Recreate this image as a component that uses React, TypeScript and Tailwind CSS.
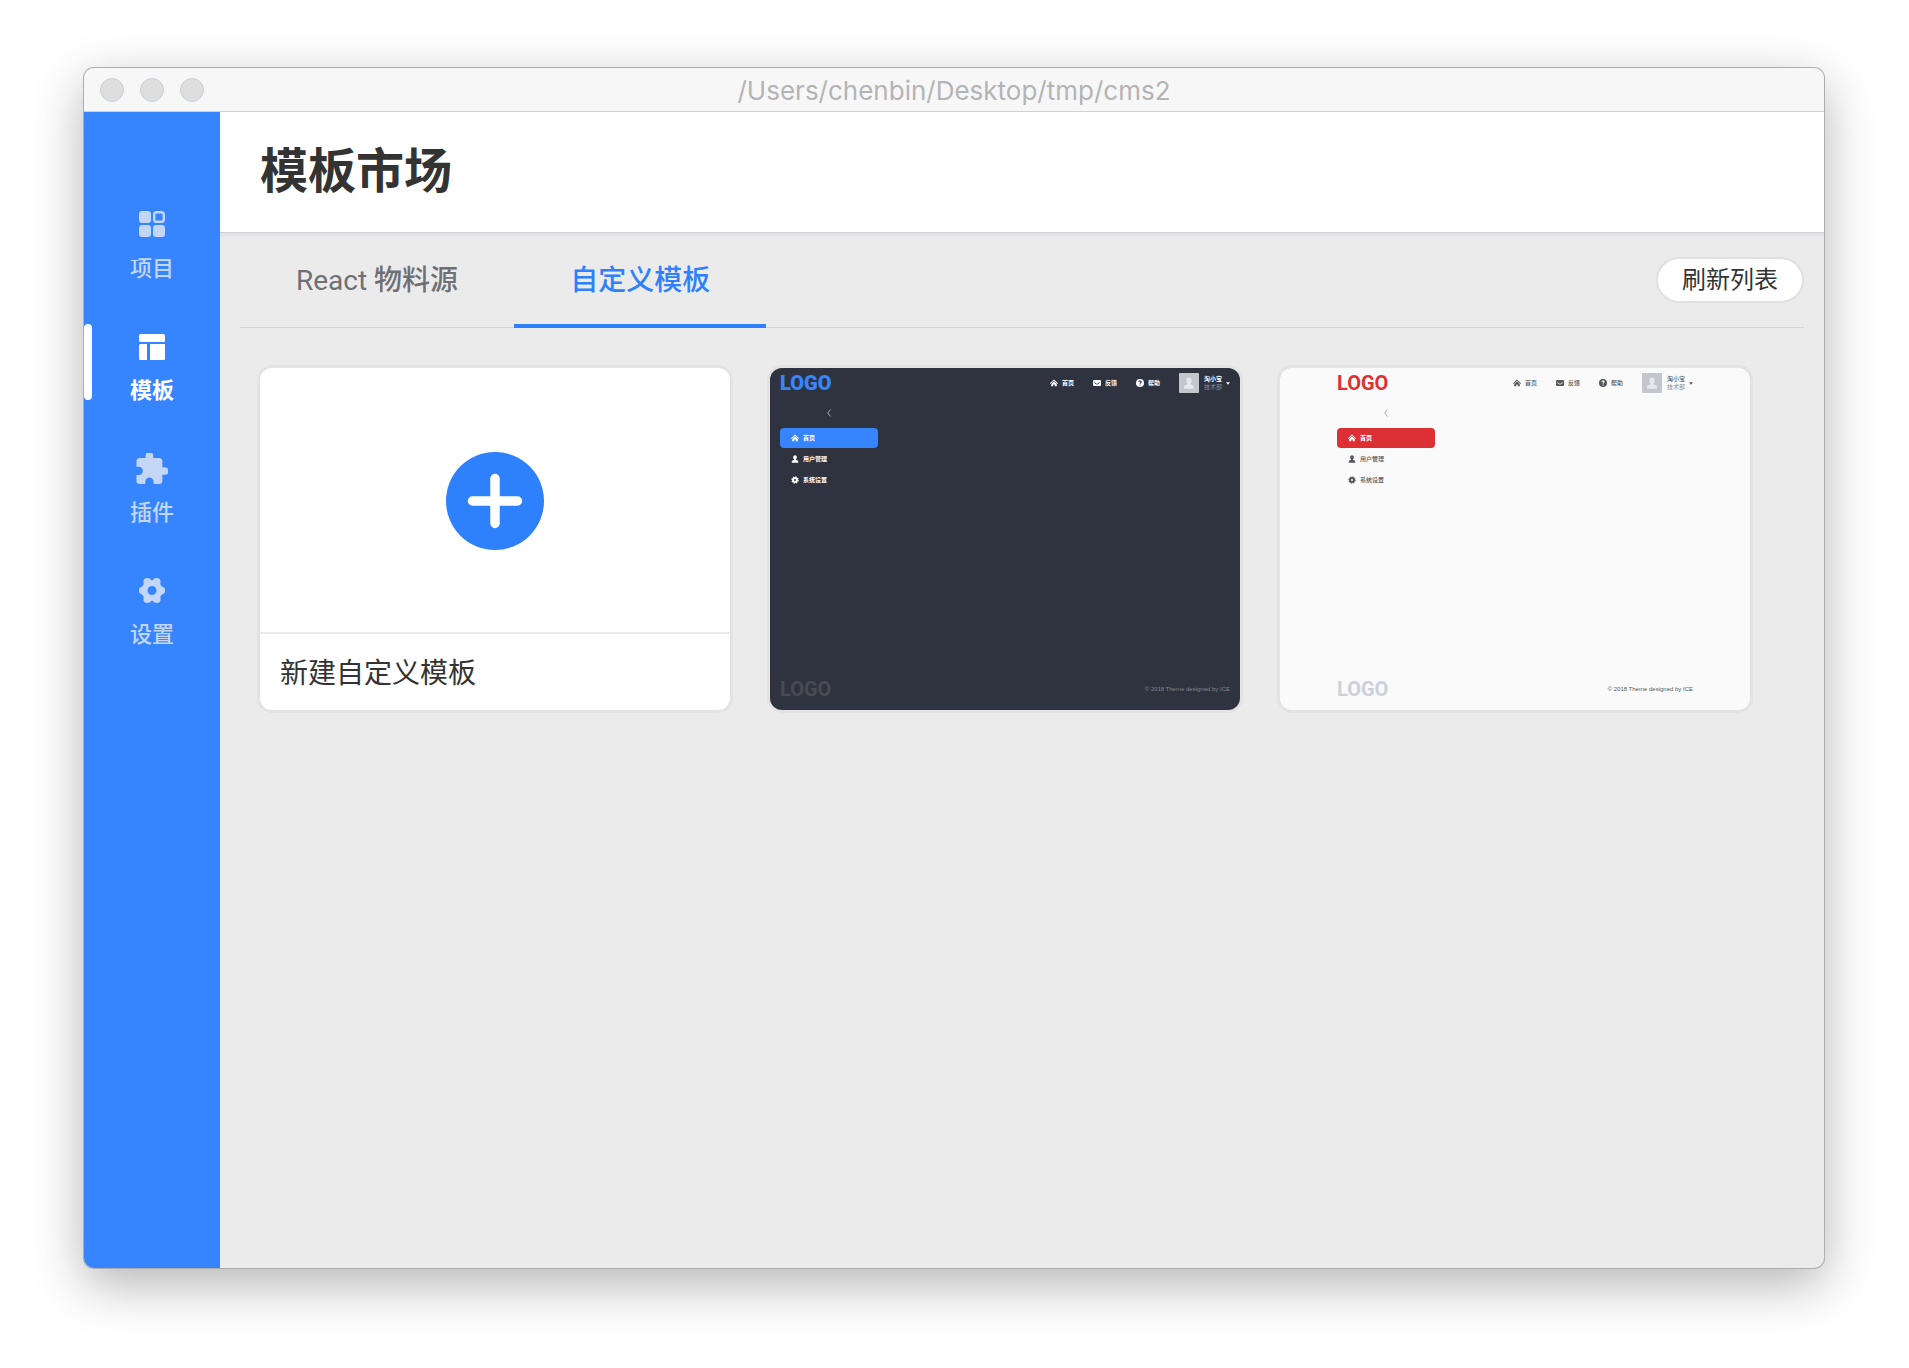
import React from "react";

type IconProps = { className?: string };

function ProjectIcon({ className }: IconProps) {
  return (
    <svg viewBox="0 0 32 32" className={className} fill="currentColor" aria-hidden="true">
      <rect x="3" y="2" width="12" height="12" rx="3" />
      <rect x="18.2" y="3.2" width="9.6" height="9.6" rx="2.4" fill="none" stroke="currentColor" strokeWidth="2.4" />
      <rect x="3" y="16" width="12" height="12" rx="3" />
      <rect x="17" y="16" width="12" height="12" rx="3" />
    </svg>
  );
}

function TemplateIcon({ className }: IconProps) {
  return (
    <svg viewBox="0 0 32 32" className={className} fill="currentColor" aria-hidden="true">
      <rect x="3" y="3" width="26" height="8" rx="1.500" />
      <path d="M4.500 13H11v16H4.500A1.500 1.500 0 0 1 3 27.500V14.500A1.500 1.500 0 0 1 4.500 13z" />
      <path d="M14 13h15v14.500a1.500 1.500 0 0 1-1.500 1.500H14z" />
    </svg>
  );
}

function PluginIcon({ className }: IconProps) {
  return (
    <svg viewBox="1.7 1.7 21 21" className={className} fill="currentColor" aria-hidden="true">
      <path d="M20.500 11H19V7c0-1.100-.9-2-2-2h-4V3.500a2.500 2.500 0 0 0-5 0V5H4c-1.100 0-1.990.9-1.990 2v3.800H3.500c1.490 0 2.700 1.210 2.700 2.700s-1.210 2.700-2.700 2.700H2V20c0 1.100.9 2 2 2h3.800v-1.500c0-1.490 1.210-2.700 2.700-2.700 1.490 0 2.700 1.210 2.700 2.700V22H17c1.100 0 2-.9 2-2v-4h1.500a2.500 2.500 0 0 0 0-5z" />
    </svg>
  );
}

function SettingsIcon({ className }: IconProps) {
  return (
    <svg viewBox="0 0 32 32" className={className} fill="currentColor" aria-hidden="true">
      <circle cx="16" cy="15.500" r="7.500" fill="none" stroke="currentColor" strokeWidth="6" />
      <circle cx="25" cy="15.500" r="4" />
      <circle cx="7" cy="15.500" r="4" />
      <circle cx="20.600" cy="7" r="4" />
      <circle cx="11.400" cy="7" r="4" />
      <circle cx="20.600" cy="24" r="4" />
      <circle cx="11.400" cy="24" r="4" />
    </svg>
  );
}

function HomeGlyph({ className }: IconProps) {
  return (
    <svg viewBox="0 0 16 16" className={className} fill="currentColor" aria-hidden="true">
      <path d="M8 1 16 8.500l-1.200 1.300L8 3.500 1.200 9.800 0 8.500z" />
      <path d="M8 5l5.500 5v4.500h-4V11h-3v3.500h-4V10z" />
    </svg>
  );
}

function MailGlyph({ className }: IconProps) {
  return (
    <svg viewBox="0 0 16 16" className={className} fill="currentColor" aria-hidden="true">
      <path
        fillRule="evenodd"
        d="M2 2h12a2 2 0 0 1 2 2v8a2 2 0 0 1-2 2H2a2 2 0 0 1-2-2V4a2 2 0 0 1 2-2zm.6 4.200L8 9.800l5.400-3.600v1.700L8 11.500 2.600 7.900z"
      />
    </svg>
  );
}

function HelpGlyph({ className }: IconProps) {
  return (
    <svg viewBox="0 0 16 16" className={className} fill="currentColor" aria-hidden="true">
      <path
        fillRule="evenodd"
        d="M8 0a8 8 0 1 1 0 16A8 8 0 0 1 8 0zM4.800 6h2c0-.8.500-1.200 1.200-1.200s1.200.4 1.200 1-.4.900-1 1.300C7.400 7.700 7 8.300 7 9.500h2c0-.8.300-1.100.9-1.500.8-.5 1.400-1.200 1.400-2.300C11.300 4 10 3 8 3S4.800 4.200 4.800 6zM7 10.800V13h2v-2.200z"
      />
    </svg>
  );
}

function UserGlyph({ className }: IconProps) {
  return (
    <svg viewBox="0 0 16 16" className={className} fill="currentColor" aria-hidden="true">
      <path d="M8 .5c2.300 0 3.700 1.700 3.700 4 0 1.700-.8 3.200-1.900 4v1l3.200 1.500c1 .5 1.500 1.500 1.500 2.500v2h-13v-2c0-1 .5-2 1.500-2.500l3.200-1.500v-1c-1.100-.8-1.900-2.300-1.900-4 0-2.300 1.400-4 3.700-4z" />
    </svg>
  );
}

function GearGlyph({ className }: IconProps) {
  return (
    <svg viewBox="0 0 16 16" className={className} fill="none" stroke="currentColor" aria-hidden="true">
      <circle cx="8" cy="8" r="4" strokeWidth="4" />
      <circle cx="8" cy="8" r="6.200" strokeWidth="2.400" strokeDasharray="2.600 2.270" />
    </svg>
  );
}

const NAV = [
  { label: "项目", Icon: ProjectIcon },
  { label: "模板", Icon: TemplateIcon, active: true },
  { label: "插件", Icon: PluginIcon },
  { label: "设置", Icon: SettingsIcon },
];

function Sidebar() {
  return (
    <nav className="flex w-[136px] shrink-0 flex-col gap-[43px] bg-[#3784ff] pt-[90px]">
      {NAV.map(({ label, Icon, active }) => (
        <a
          key={label}
          href="#"
          className={
            active
              ? "relative flex flex-col items-center pt-[7px] text-[22px] leading-6 font-bold text-white"
              : "relative flex flex-col items-center pt-[7px] text-[22px] leading-6 font-medium text-[#c3d6f6]"
          }
        >
          {active && <span className="absolute top-0 left-0 h-[76px] w-2 rounded-full bg-white" />}
          <Icon className="size-8" />
          <span className="mt-4">{label}</span>
        </a>
      ))}
    </nav>
  );
}

const TOP_LINKS = [
  { label: "首页", Icon: HomeGlyph },
  { label: "反馈", Icon: MailGlyph },
  { label: "帮助", Icon: HelpGlyph },
];

const SIDE_LINKS = [
  { label: "首页", Icon: HomeGlyph },
  { label: "用户管理", Icon: UserGlyph },
  { label: "系统设置", Icon: GearGlyph },
];

type Theme = {
  root: string;
  logo: string;
  active: string;
  text: string;
  dept: string;
  footLogo: string;
  copyright: string;
};

const DARK: Theme = {
  root: "bg-[#2f3340] px-[10px]",
  logo: "text-[#3784ff] font-black",
  active: "bg-[#3784ff]",
  text: "text-white font-bold",
  dept: "text-[#8a8c93]",
  footLogo: "text-[#484b56]",
  copyright: "text-[#83858c]",
};

const LIGHT: Theme = {
  root: "bg-[#fafafa] px-[57px]",
  logo: "text-[#dc3034] font-bold",
  active: "bg-[#dc3034]",
  text: "text-[#55575d] font-medium",
  dept: "text-[#8a8c93]",
  footLogo: "text-[#cbd0dc]",
  copyright: "text-[#55575d]",
};

function TemplatePreview({ theme, name }: { theme: Theme; name: string }) {
  return (
    <article
      aria-label={name}
      className={`flex flex-col overflow-hidden rounded-xl text-[6px] leading-2 shadow-[0_0_0_3px_#e3e3e3] ${theme.root} ${theme.text}`}
    >
      <div className="flex h-[30px] items-center">
        <span className={`text-[20px] leading-5 ${theme.logo}`}>LOGO</span>
        <div className="ml-auto flex items-center gap-[19px]">
          {TOP_LINKS.map(({ label, Icon }) => (
            <span key={label} className="flex items-center gap-1">
              <Icon className="size-2" />
              {label}
            </span>
          ))}
          <div className="flex items-center">
            <span className="flex size-5 items-center justify-center rounded-[1px] bg-[#c3c6cc] text-[#e6e8ec]">
              <UserGlyph className="size-3" />
            </span>
            <span className="ml-[5px] flex flex-col">
              <span>淘小宝</span>
              <span className={`font-normal ${theme.dept}`}>技术部</span>
            </span>
            <svg viewBox="0 0 6 4" className="ml-1 h-[3px] w-1" fill="currentColor" aria-hidden="true">
              <path d="M0 0h6L3 4z" />
            </svg>
          </div>
        </div>
      </div>
      <div className="w-[98px]">
        <div className="flex h-[30px] items-center justify-center">
          <svg viewBox="0 0 4 8" className="h-2 w-1" fill="none" stroke="#a4a6ab" strokeWidth="1" aria-hidden="true">
            <path d="M3.500.5.700 4l2.800 3.500" />
          </svg>
        </div>
        <div className="flex flex-col gap-px">
          {SIDE_LINKS.map(({ label, Icon }, i) => (
            <span
              key={label}
              className={
                i === 0
                  ? `flex h-5 items-center gap-1 rounded-sm pl-[11px] font-bold text-white ${theme.active}`
                  : "flex h-5 items-center gap-1 pl-[11px]"
              }
            >
              <Icon className="size-2" />
              {label}
            </span>
          ))}
        </div>
      </div>
      <div className="mt-auto flex h-[42px] items-center justify-between">
        <span className={`text-[20px] leading-5 font-bold ${theme.footLogo}`}>LOGO</span>
        <span className={`font-['Liberation_Sans',sans-serif] font-normal ${theme.copyright}`}>
          © 2018 Theme designed by ICE
        </span>
      </div>
    </article>
  );
}

function CreateCard() {
  return (
    <button
      type="button"
      className="flex flex-col overflow-hidden rounded-xl bg-white text-left shadow-[0_0_0_3px_#e3e3e3]"
    >
      <span className="flex h-[264px] w-full items-center justify-center pt-[2px]">
        <svg viewBox="0 0 98 98" className="size-[98px]" aria-hidden="true">
          <circle cx="49" cy="49" r="49" fill="#2e80fd" />
          <path d="M49 26.500v45M26.500 49h45" stroke="#fff" strokeWidth="9.500" strokeLinecap="round" />
        </svg>
      </span>
      <span className="flex h-[78px] w-full items-center border-t-2 border-[#ebebeb] px-5 pt-1 text-[28px] leading-9 text-[#333]">
        新建自定义模板
      </span>
    </button>
  );
}

export default function App() {
  return (
    <div className="flex min-h-screen flex-col bg-white pt-[68px] pr-[85px] pb-[100px] pl-[84px] font-[Roboto,'Noto_Sans_CJK_SC',sans-serif]">
      <div className="flex flex-1 flex-col overflow-hidden rounded-[10px] bg-[#ebebeb] shadow-[0_0_0_1px_#adadad,0_16px_52px_rgba(0,0,0,0.3)]">
        <div className="grid h-11 grid-cols-[1fr_auto_1fr] items-center border-b border-[#d0d0d4] bg-[#f7f7f7] px-4">
          <div className="flex gap-4">
            <button type="button" aria-label="关闭" className="size-6 rounded-full border border-[#cbced8] bg-[#dedede]" />
            <button type="button" aria-label="最小化" className="size-6 rounded-full border border-[#cbced8] bg-[#dedede]" />
            <button type="button" aria-label="最大化" className="size-6 rounded-full border border-[#cbced8] bg-[#dedede]" />
          </div>
          <span className="pt-[2px] font-[Inter,sans-serif] text-[26px] leading-8 text-[#b4b4b6]">
            /Users/chenbin/Desktop/tmp/cms2
          </span>
        </div>

        <div className="flex flex-1">
          <Sidebar />
          <main className="flex min-w-0 flex-1 flex-col">
            <header className="flex h-[120px] items-center bg-white px-10 shadow-[0_1px_0_#cfd1d6,0_4px_0_#e2e2e2]">
              <h1 className="text-[48px] leading-14 font-bold text-[#333]">模板市场</h1>
            </header>

            <section className="px-5 pt-1">
              <div className="flex items-start justify-between shadow-[inset_0_-1px_0_#d3d4d8]">
                <div role="tablist" className="flex text-[28px] leading-9 font-medium">
                  <button
                    type="button"
                    role="tab"
                    aria-selected="false"
                    className="h-[92px] px-14 pb-[2px] text-[#6f7076]"
                  >
                    <span className="font-normal">React</span> 物料源
                  </button>
                  <button
                    type="button"
                    role="tab"
                    aria-selected="true"
                    className="h-[92px] border-b-4 border-[#2e80fd] px-14 pt-[2px] text-[#2e80fd]"
                  >
                    自定义模板
                  </button>
                </div>
                <button
                  type="button"
                  className="mt-[21px] h-[46px] rounded-full border-2 border-[#e0e0e0] bg-white px-6 text-[24px] leading-8 text-[#333]"
                >
                  刷新列表
                </button>
              </div>

              <div className="mt-10 mr-[54px] ml-5 grid grid-cols-3 gap-10">
                <CreateCard />
                <TemplatePreview theme={DARK} name="深色模板" />
                <TemplatePreview theme={LIGHT} name="浅色模板" />
              </div>
            </section>
          </main>
        </div>
      </div>
    </div>
  );
}
